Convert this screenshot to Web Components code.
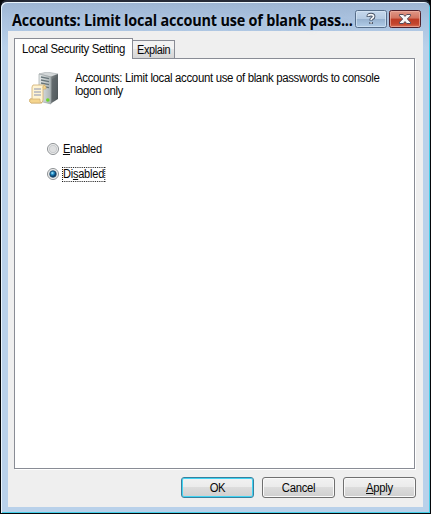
<!DOCTYPE html>
<html lang="en"><head><meta charset="utf-8"><title>Local Security Setting</title>
<style>html,body{margin:0;background:#05070a;overflow:hidden}</style></head>
<body>
<policy-dialog>
  <title-bar slot="title">Accounts: Limit local account use of blank pass...</title-bar>
  <tab-panel>
    <tab-item slot="tabs" active>Local Security Setting</tab-item>
    <tab-item slot="tabs">Explain</tab-item>
    <policy-summary>Accounts: Limit local account use of blank passwords to console<br><span style="letter-spacing:-.45px">logon only</span></policy-summary>
    <radio-option><u>E</u>nabled</radio-option>
    <radio-option checked>Di<u>s</u>abled</radio-option>
  </tab-panel>
  <push-button slot="actions" primary>OK</push-button>
  <push-button slot="actions">Cancel</push-button>
  <push-button slot="actions"><u>A</u>pply</push-button>
</policy-dialog>
<script>
const define = (name, html) => customElements.define(name, class extends HTMLElement {
  constructor() { super(); this.attachShadow({mode:'open'}).innerHTML = html; }
});
define('policy-dialog', `<style>
:host{display:grid;grid-template-rows:29px 1fr;grid-template-columns:minmax(0,1fr);box-sizing:border-box;width:431px;height:514px;padding:0 7px 6px;border:1px solid #05070a;border-top:2px solid #252a36;border-radius:7px 7px 0 0;
background:linear-gradient(#9db5d2,#a9c1de 16px,#b9d1ea 45px,#b9d1ea);box-shadow:inset 1px 1px #e9f4fc,inset -1px -1px #45cfe9;font:12px/13px "Liberation Sans",Arial,sans-serif;color:#080808}
main{background:#efefef;display:flex;flex-direction:column;padding:7px 8px 9px 6px;box-sizing:border-box}
slot:not([name]){display:block;height:431px}
footer{display:flex;justify-content:flex-end;gap:8px;margin:8px -1px 0 0}
</style><slot name="title"></slot><main><slot></slot><footer><slot name="actions"></slot></footer></main>`);
define('title-bar', `<style>
:host{display:flex;align-items:flex-start;padding:8px 0 0 4px;font:bold 16px/20px "Open Sans","Noto Sans",sans-serif;letter-spacing:-.2px;white-space:nowrap;color:#02050a;text-shadow:0 0 5px #cfe0f180}
div{flex:0 0 343px;width:343px;min-width:0}
span{display:block;width:343px;transform:scaleX(.9);transform-origin:0 0}
svg{flex:none;display:block;margin-right:2px}svg:last-of-type{margin-right:0}
</style><div><span><slot></slot></span></div>
<svg width="32" height="18" viewBox="0 0 32 18"><defs><linearGradient id="g" x2="0" y2="1"><stop stop-color="#c7d9ed"/><stop offset=".48" stop-color="#b5cbe3"/><stop offset=".5" stop-color="#96b1cf"/><stop offset="1" stop-color="#b3cee9"/></linearGradient></defs><rect x=".5" y=".5" width="31" height="17" rx="2" fill="url(#g)" stroke="#566d89"/><rect x="1.5" y="1.5" width="29" height="15" rx="1" fill="none" stroke="#d9e8f7" stroke-opacity=".7"/><g fill="none"><path d="M13.2 6.8q.2-2.2 2.8-2.2T18.6 6.4q0 1.2-1.3 1.8-1.2.7-1.2 2.3M16.1 12v2" stroke="#475366" stroke-width="3.6"/><path d="M13.2 6.2q.2-1.6 2.8-1.6T18.6 6.4q0 1.2-1.3 1.8-1.2.7-1.2 1.7M16.1 12.2v1.4" stroke="#f6f8fa" stroke-width="1.7"/></g></svg>
<svg width="32" height="18" viewBox="0 0 32 18"><defs><linearGradient id="r" x2="0" y2="1"><stop stop-color="#e19a8b"/><stop offset=".45" stop-color="#d37460"/><stop offset=".5" stop-color="#bd3b25"/><stop offset=".8" stop-color="#c4462e"/><stop offset="1" stop-color="#df7b61"/></linearGradient></defs><rect x=".5" y=".5" width="31" height="17" rx="2" fill="url(#r)" stroke="#50202b"/><rect x="1.5" y="1.5" width="29" height="15" rx="1" fill="none" stroke="#efb4a6" stroke-opacity=".65"/><path d="M10.5 4.5h3.8L16 6.4l1.7-1.9h3.8v1.3L18.3 9l3.2 3.2v1.3h-3.8L16 11.6l-1.7 1.9h-3.8v-1.3L13.7 9l-3.2-3.2Z" fill="#f7f7f7" stroke="#544b58"/></svg>`);
define('tab-panel', `<style>
:host{display:flex;flex-direction:column;height:431px;box-sizing:border-box}
nav{display:flex;align-items:flex-end;height:20px}
section{flex:1;box-sizing:border-box;border:1px solid #898c95;background:#fff;padding:13px 14px;box-shadow:1px 1px #fff}
</style><nav><slot name="tabs"></slot></nav><section><slot></slot></section>`);
define('tab-item', `<style>
:host{display:block;box-sizing:border-box;width:42px;height:18px;border:1px solid #898c95;border-left:0;border-bottom:0;background:linear-gradient(#f2f2f2 45%,#e4e4e4 50%,#d6d6d6);padding:3px 0 0 4px;white-space:nowrap;letter-spacing:-.4px}
:host([active]){width:119px;height:21px;margin-bottom:-1px;border-left:1px solid #898c95;background:#fff;padding:4px 0 0 7px;position:relative;letter-spacing:-.35px}
span{display:block;transform:scaleX(.91);transform-origin:0 0}:host([active]) span{transform:scaleX(.95)}
</style><span><slot></slot></span>`);
define('policy-summary', `<style>
:host{display:flex;height:68px;white-space:nowrap;letter-spacing:-.35px}
svg{flex:none;margin-right:14px}p{margin:0;transform:scaleX(.953);transform-origin:0 0}
</style><svg width="32" height="34" viewBox="0 0 32 34"><defs><linearGradient id="f"><stop stop-color="#e8ebeb"/><stop offset="1" stop-color="#a9b1b3"/></linearGradient><linearGradient id="s" x2="1" y2=".5"><stop stop-color="#858b8d"/><stop offset="1" stop-color="#50585b"/></linearGradient></defs>
<path d="m10 2 8-2 11 2-7 3Z" fill="#d4d8d9" stroke="#a4aaac" stroke-width=".6"/><path d="m21 5 8-3v25l-8 5Z" fill="url(#s)"/><path d="m10 2 12 3v27l-12-3Z" fill="url(#f)" stroke="#929a9c" stroke-width=".6"/>
<path d="m12 5 8 1.7M12 8l8 1.7M12 11l8 1.7M12 14l8 1.7" stroke="#69767a" stroke-width="1.3"/><path d="m23 7 5-2v20l-5 3Z" fill="#596164" opacity=".6"/><circle cx="18.8" cy="28" r="1.8" fill="#6bd52b"/>
<path d="M4 13h12q-2 1-2 3v12q0 3-3 3H2q-2-1-1-4h2V15Z" fill="#fff4d2" stroke="#cfac6d" stroke-width=".8"/><path d="M1 27h10q-1 3 2 4H2q-2-1-1-4M14 16v-2q2-2 3 1v2h-3" fill="#f5d58e" stroke="#cfac6d" stroke-width=".7"/><path d="M5 17h7M5 20h7M5 23h7" stroke="#8992b2" stroke-width="1"/></svg><p><slot></slot></p>`);
define('radio-option', `<style>
:host{display:flex;align-items:center;height:25px;margin-left:18px;box-sizing:border-box;padding-bottom:7px;letter-spacing:-.25px}
svg{margin-right:3px}.dot{display:none}:host([checked]) .dot{display:block}
span{height:13px;line-height:12px;border:1px solid transparent;transform:scaleX(.92);transform-origin:0 0}
:host([checked]) span{border:1px dotted #111}
</style><svg width="12" height="12" viewBox="0 0 12 12"><defs><radialGradient id="d" cx=".4" cy=".35"><stop stop-color="#c6f1ff"/><stop offset=".45" stop-color="#299bd3"/><stop offset="1" stop-color="#0b416f"/></radialGradient></defs><circle cx="6" cy="6" r="5.5" fill="#f5f5f5" stroke="#8b8f92"/><circle cx="6" cy="6" r="3.8" fill="#dedfe0" stroke="#bfc3c5" stroke-width=".8"/><circle class="dot" cx="6" cy="6" r="3.2" fill="url(#d)" stroke="#174568" stroke-width=".8"/></svg><span><slot></slot></span>`);
define('push-button', `<style>
:host{display:block;box-sizing:border-box;width:73px;height:21px;border:1px solid #707070;border-radius:3px;text-align:center;line-height:20px;letter-spacing:-.3px;background:linear-gradient(#f2f2f2,#ebebeb 48%,#dcdcdc 50%,#cfcfcf);box-shadow:inset 0 0 0 1px #fafafa}
:host([primary]){border-color:#37819f;box-shadow:inset 0 0 0 1px #42d4f3}
span{display:block;transform:scaleX(.94)}
</style><span><slot></slot></span>`);
</script>
</body></html>
